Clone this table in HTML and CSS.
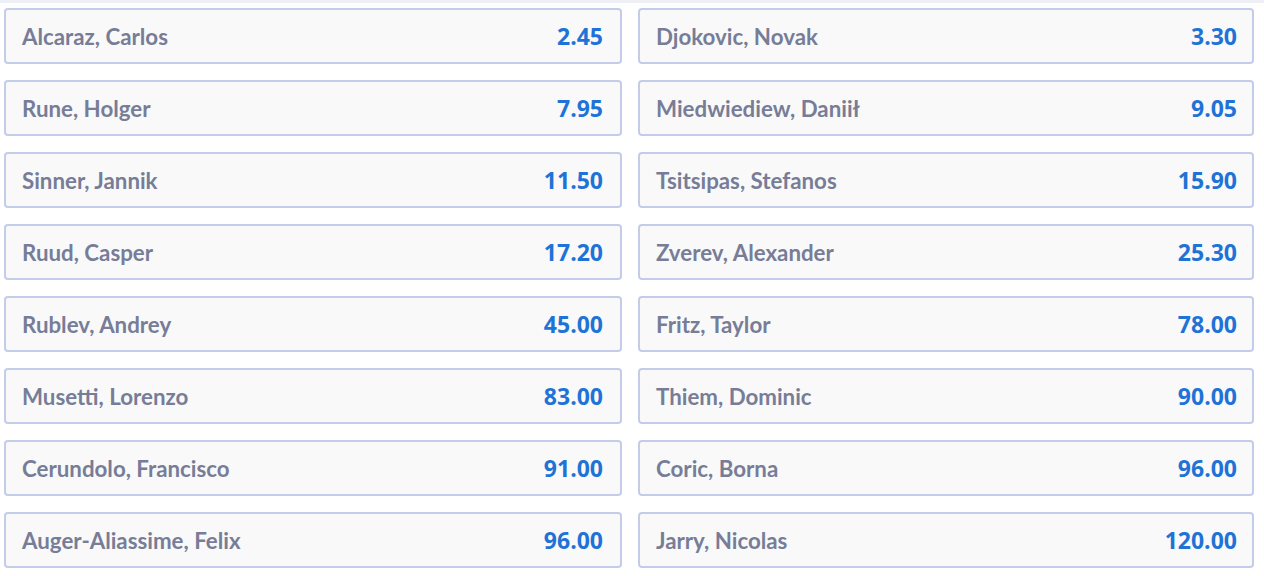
FILE: index.html
```html
<!DOCTYPE html>
<html>
<head>
<meta charset="utf-8">
<link rel="stylesheet" href="styles.css">
</head>
<body>
<div class="topbar"></div>
<div class="grid">
  <div class="card"><span class="name">Alcaraz, Carlos</span><span class="odds">2.45</span></div>
  <div class="card"><span class="name">Djokovic, Novak</span><span class="odds">3.30</span></div>
  <div class="card"><span class="name">Rune, Holger</span><span class="odds">7.95</span></div>
  <div class="card"><span class="name">Miedwiediew, Daniił</span><span class="odds">9.05</span></div>
  <div class="card"><span class="name">Sinner, Jannik</span><span class="odds">11.50</span></div>
  <div class="card"><span class="name">Tsitsipas, Stefanos</span><span class="odds">15.90</span></div>
  <div class="card"><span class="name">Ruud, Casper</span><span class="odds">17.20</span></div>
  <div class="card"><span class="name">Zverev, Alexander</span><span class="odds">25.30</span></div>
  <div class="card"><span class="name">Rublev, Andrey</span><span class="odds">45.00</span></div>
  <div class="card"><span class="name">Fritz, Taylor</span><span class="odds">78.00</span></div>
  <div class="card"><span class="name">Musetti, Lorenzo</span><span class="odds">83.00</span></div>
  <div class="card"><span class="name">Thiem, Dominic</span><span class="odds">90.00</span></div>
  <div class="card"><span class="name">Cerundolo, Francisco</span><span class="odds">91.00</span></div>
  <div class="card"><span class="name">Coric, Borna</span><span class="odds">96.00</span></div>
  <div class="card"><span class="name">Auger-Aliassime, Felix</span><span class="odds">96.00</span></div>
  <div class="card"><span class="name">Jarry, Nicolas</span><span class="odds">120.00</span></div>
</div>
</body>
</html>
```

FILE: styles.css
```css
html, body {
  margin: 0;
  padding: 0;
  background: #ffffff;
}
.topbar {
  height: 3px;
  background: #edeff5;
}
.grid {
  display: grid;
  grid-template-columns: 618px 616px;
  column-gap: 16px;
  row-gap: 16px;
  padding: 5px 0 0 4px;
}
.card {
  box-sizing: border-box;
  height: 56px;
  display: flex;
  align-items: center;
  justify-content: space-between;
  padding: 0 17px 0 16px;
  background: #f9f9fa;
  border: 2px solid #c3cce9;
  border-radius: 4px;
}
.card:nth-child(even) {
  padding-right: 15px;
}
.name {
  font-family: Lato, "Liberation Sans", sans-serif;
  font-weight: 700;
  font-size: 22.3px;
  color: #777d97;
}
.odds {
  font-family: "Open Sans", "Noto Sans", sans-serif;
  font-weight: 700;
  font-size: 23px;
  color: #1f73d6;
}
```
